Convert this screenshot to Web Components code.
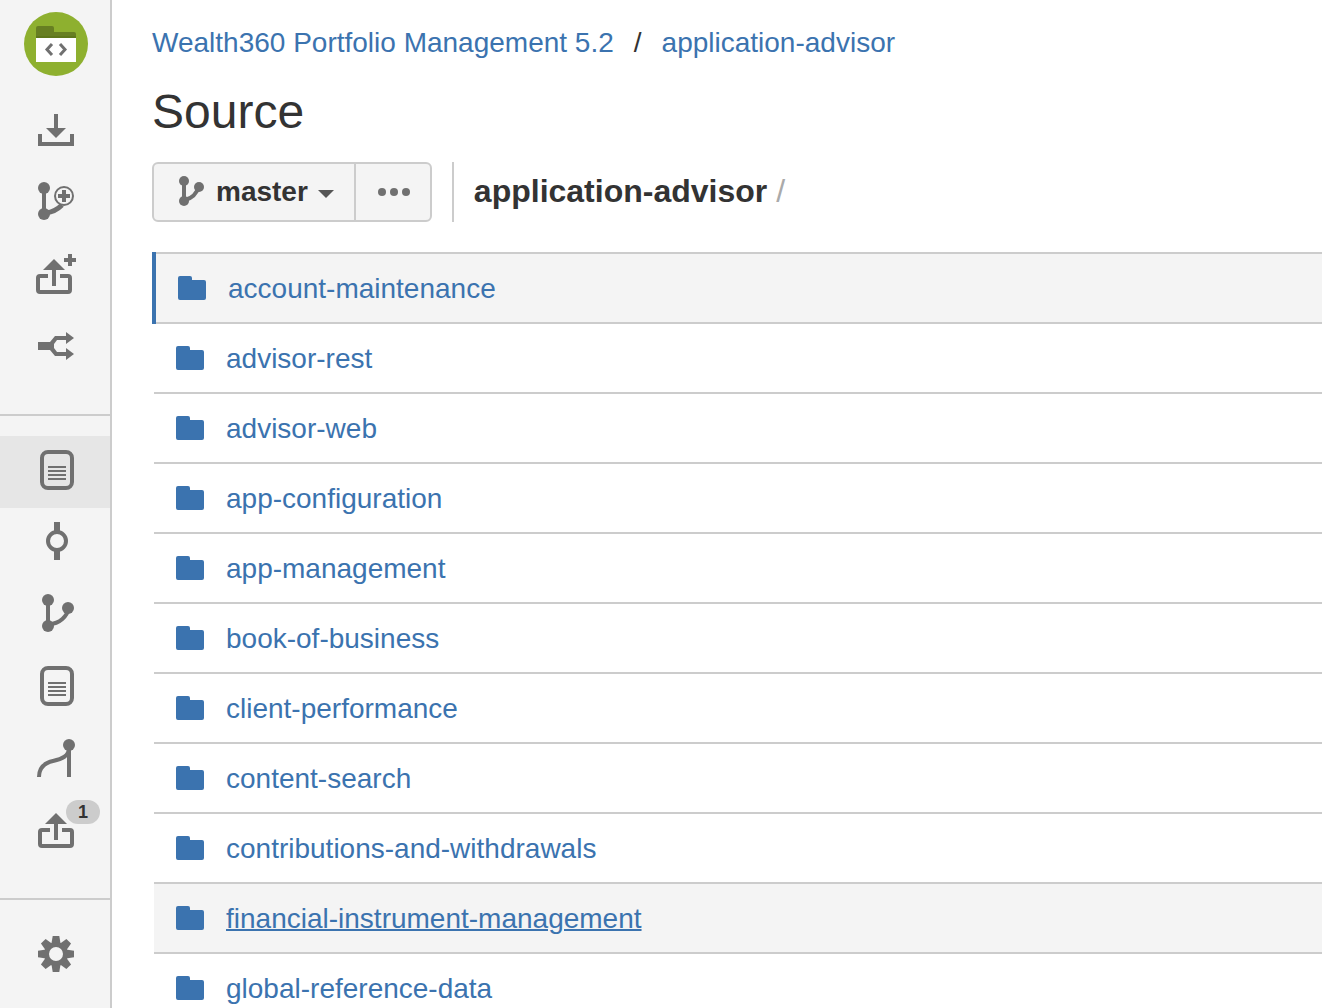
<!DOCTYPE html>
<html lang="en">
<head>
<meta charset="utf-8">
<title>Source</title>
<style>
  body { margin: 0; background: #fff; color: #333; font: 28px/40px "Liberation Sans", Arial, sans-serif; }
</style>
</head>
<body>
<repo-app>
  <side-bar slot="side">
    <side-group>
      <side-item icon="download" label="Clone"></side-item>
      <side-item icon="branch-add" label="Create branch"></side-item>
      <side-item icon="share-add" label="Create pull request"></side-item>
      <side-item icon="fork" label="Fork"></side-item>
    </side-group>
    <side-group divided>
      <side-item icon="page" label="Source" active></side-item>
      <side-item icon="commit" label="Commits"></side-item>
      <side-item icon="branch" label="Branches"></side-item>
      <side-item icon="page" label="Files"></side-item>
      <side-item icon="compare" label="Compare"></side-item>
      <side-item icon="share" label="Pull requests">1</side-item>
    </side-group>
    <side-group divided>
      <side-item icon="gear" label="Settings"></side-item>
    </side-group>
  </side-bar>
  <bread-crumbs>
    <a href="#project">Wealth360 Portfolio Management 5.2</a>
    <span>/</span>
    <a href="#repo">application-advisor</a>
  </bread-crumbs>
  <page-title>Source</page-title>
  <source-toolbar>
    <branch-picker>master</branch-picker>
    <source-path slot="path">application-advisor</source-path>
  </source-toolbar>
  <file-table></file-table>
</repo-app>

<script>
const define = (name, html, setup) => customElements.define(name, class extends HTMLElement {
  constructor() {
    super();
    this.attachShadow({ mode: 'open' }).innerHTML = html;
  }
  connectedCallback() { if (setup) setup(this, this.shadowRoot); }
});

const shareShape = `<path d="M56 17L67 28H45Z" fill="currentColor" stroke="none"/><path d="M56 27V44M50 34H42Q40 34 40 36V48Q40 50 42 50H70Q72 50 72 48V36Q72 34 70 34H62"/>`;
const tooth = a => `<path d="M-4.6 -10L-3.3 -18H3.3L4.6 -10Z" transform="rotate(${a})" fill="currentColor" stroke="none"/>`;

/* Every side icon is drawn on a 110 by 72 field. */
const icons = {
  'download': `<g transform="translate(0 -4)"><path d="M56 22V37M40 42V52H72V42"/><path d="M46 36H66L56 46Z" fill="currentColor" stroke="none"/></g>`,
  'branch-add': `<g transform="translate(0 -4)"><path d="M44 24V50"/><path d="M46 49C53 48 58 45 62 41" stroke-width="5"/><g fill="currentColor" stroke="none"><circle cx="44" cy="24" r="6"/><circle cx="44" cy="50" r="6"/></g><circle cx="64" cy="32" r="9" fill="#f4f4f4" stroke-width="2"/><path d="M58 32H70M64 26V38"/></g>`,
  'share-add': `<g transform="translate(-2 2)">${shareShape}</g><path d="M64 20H76M70 14V26"/>`,
  'fork': `<g transform="translate(0 -4)" fill="currentColor" stroke="none"><path d="M38 34H50L55 28H66V32H57L54 36V40L57 44H66V48H55L50 42H38Z"/><path d="M66 24L74 30L66 36ZM66 40L74 46L66 52Z"/></g>`,
  'page': `<rect x="42" y="16" width="30" height="36" rx="6"/><path d="M48 31H66M48 35H66M48 39H66M48 43H66" stroke-width="2"/>`,
  'commit': `<circle cx="57" cy="33" r="9"/><path d="M57 14V24M57 42V52" stroke-width="6"/>`,
  'branch': `<path d="M48 20V46M49 44C60 44 67 36 69 28"/><g fill="currentColor" stroke="none"><circle cx="48" cy="20" r="6"/><circle cx="48" cy="46" r="6"/><circle cx="68" cy="28" r="6"/></g>`,
  'compare': `<path d="M69 21V53M39 53C39 44 44 39 53 37C62 35 69 32 69 24"/><circle cx="69" cy="21" r="6" fill="currentColor" stroke="none"/>`,
  'share': shareShape,
  'gear': `<g transform="translate(56 34)">${[0, 45, 90, 135, 180, 225, 270, 315].map(tooth).join('')}<circle r="9.500" stroke-width="5"/></g>`
};

define('repo-app', `
  <style>
    :host { display: flex; height: 100vh; overflow: hidden; }
    main { flex: 1; min-width: 0; padding: 23px 0 0 40px; overflow-y: auto; scrollbar-width: none; box-sizing: border-box; }
  </style>
  <slot name="side"></slot>
  <main><slot></slot></main>`);

define('side-bar', `
  <style>
    :host { display: block; flex: none; width: 110px; background: #f4f4f4; border-right: 2px solid #ccc; overflow: hidden; }
    .logo { display: flex; justify-content: center; width: 112px; height: 96px; padding-top: 12px; box-sizing: border-box; }
    svg { display: block; width: 64px; height: 64px; }
  </style>
  <a class="logo" href="#repo" aria-label="Repository">
    <svg viewBox="0 0 64 64">
      <circle cx="32" cy="32" r="32" fill="#8eb02f"/>
      <path d="M12 26V16Q12 14 14 14H28Q30 14 30 16V20H50Q52 20 52 22V26Z" fill="#677f22"/>
      <path d="M12 25H52" stroke="#577014" stroke-width="1"/>
      <path d="M12 26H52V50H12Z" fill="#fff"/>
      <path d="M28 32L23 37.500L28 43M36 32L41 37.500L36 43" fill="none" stroke="#707070" stroke-width="3"/>
    </svg>
  </a>
  <nav><slot></slot></nav>`);

define('side-group', `
  <style>
    :host { display: block; padding-bottom: 30px; }
    :host([divided]) { border-top: 2px solid #ccc; padding-top: 20px; }
  </style>
  <slot></slot>`);

define('side-item', `
  <style>
    :host { display: block; color: #707070; }
    :host([active]) { background: #e6e6e6; }
    a { display: block; position: relative; height: 72px; color: inherit; }
    svg { display: block; width: 110px; height: 72px; fill: none; stroke: currentColor; stroke-width: 4; }
    .badge { position: absolute; top: 4px; right: 10px; min-width: 34px; height: 24px; border-radius: 12px; background: #ccc; color: #333; font-size: 18px; line-height: 24px; font-weight: bold; text-align: center; }
  </style>
  <a href="#"></a>`, (el, root) => {
    const a = root.querySelector('a');
    a.setAttribute('aria-label', el.getAttribute('label'));
    a.innerHTML = `<svg viewBox="0 0 110 72">${icons[el.getAttribute('icon')]}</svg>` +
      (el.textContent.trim() ? '<span class="badge"><slot></slot></span>' : '');
  });

define('bread-crumbs', `
  <style>
    :host { display: flex; gap: 20px; }
    ::slotted(a) { color: #3b73af; text-decoration: none; }
  </style>
  <slot></slot>`);

define('page-title', `
  <style>
    :host { display: block; margin-top: 19px; }
    h1 { margin: 0; font-size: 48px; line-height: 60px; font-weight: normal; }
  </style>
  <h1><slot></slot></h1>`);

define('source-toolbar', `
  <style>
    :host { display: flex; height: 60px; margin: 20px 0 30px; }
    .path { margin-left: 20px; padding-left: 20px; border-left: 2px solid #ccc; }
  </style>
  <slot></slot>
  <div class="path"><slot name="path"></slot></div>`);

define('branch-picker', `
  <style>
    :host { display: flex; }
    button { display: flex; align-items: center; justify-content: center; height: 60px; margin: 0; padding: 0 20px; box-sizing: border-box; border: 2px solid #ccc; background: #f4f4f4; color: #333; font: bold 28px/40px "Liberation Sans", Arial, sans-serif; }
    .pick { border-radius: 6px 0 0 6px; }
    .more { border-radius: 0 6px 6px 0; margin-left: -2px; }
    svg { display: block; flex: none; }
    .branch { margin-right: 10px; }
    .caret { margin-left: 10px; }
  </style>
  <button class="pick" type="button">
    <svg class="branch" width="32" height="32" viewBox="0 1 32 32" fill="none" stroke="#707070" stroke-width="4">
      <path d="M10 6V26M11 25C19 23 23 18 25 11"/>
      <g fill="#707070" stroke="none"><circle cx="10" cy="6" r="5"/><circle cx="10" cy="26" r="5"/><circle cx="25" cy="12" r="5"/></g>
    </svg>
    <slot></slot>
    <svg class="caret" width="16" height="12" viewBox="0 0 16 12"><path d="M0 4H16L8 12Z" fill="#555"/></svg>
  </button>
  <button class="more" type="button" aria-label="More">
    <svg width="34" height="8" viewBox="0 0 34 8" fill="#707070"><circle cx="6" cy="4" r="4"/><circle cx="18" cy="4" r="4"/><circle cx="30" cy="4" r="4"/></svg>
  </button>`);

define('source-path', `
  <style>
    :host { display: block; font-size: 32px; line-height: 58px; font-weight: bold; }
    span { color: #aaa; font-weight: normal; }
  </style>
  <slot></slot> <span>/</span>`);

const folders = ['account-maintenance', 'advisor-rest', 'advisor-web', 'app-configuration', 'app-management', 'book-of-business',
  'client-performance', 'content-search', 'contributions-and-withdrawals', 'financial-instrument-management', 'global-reference-data'];
const hovered = 'financial-instrument-management';

define('file-table', `
  <style>
    :host { display: block; }
    table { width: 100%; border-collapse: collapse; }
    td { height: 68px; padding: 0 22px; border-top: 2px solid #ccc; border-bottom: 2px solid #ccc; }
    .focused td { background: #f4f4f4; border-left: 4px solid #3b73af; }
    .hover td { background: #f4f4f4; }
    .hover a { text-decoration: underline; text-decoration-thickness: 2px; }
    div { display: flex; align-items: center; gap: 22px; }
    svg { display: block; flex: none; }
    a { padding-top: 2px; color: #3b73af; text-decoration: none; }
  </style>
  <table><tbody></tbody></table>`, (el, root) => {
    root.querySelector('tbody').innerHTML = folders.map((name, i) => `
      <tr class="${i === 0 ? 'focused' : name === hovered ? 'hover' : ''}"><td><div>
        <svg width="28" height="24" viewBox="0 0 28 24"><path d="M0 2Q0 0 2 0H12Q14 0 14 2V4H26Q28 4 28 6V22Q28 24 26 24H2Q0 24 0 22Z" fill="#3b73af"/></svg>
        <a href="#${name}">${name}</a>
      </div></td></tr>`).join('');
  });
</script>
</body>
</html>
